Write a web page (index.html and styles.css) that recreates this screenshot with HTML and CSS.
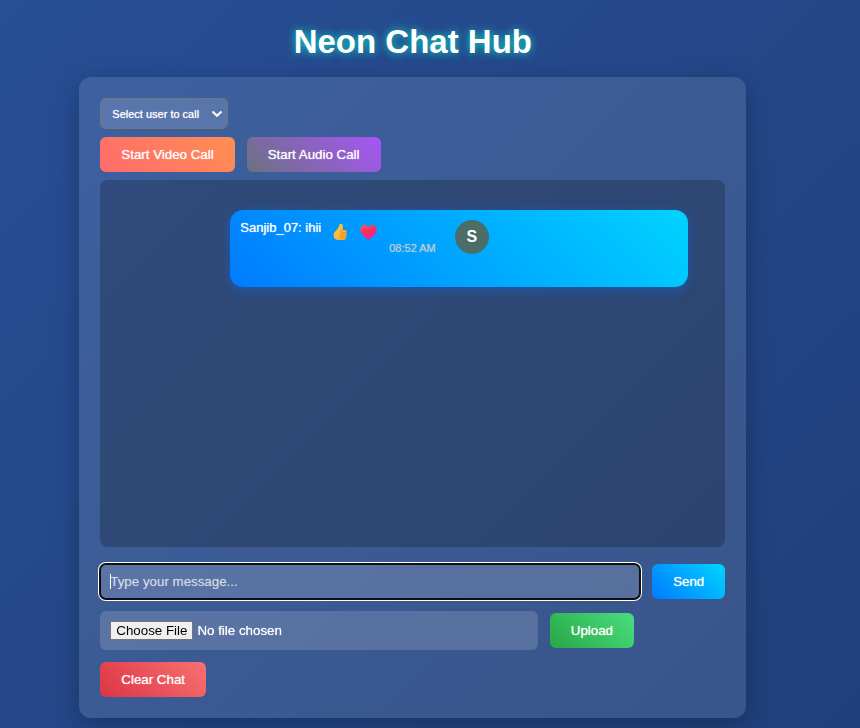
FILE: index.html
```html
<!DOCTYPE html>
<html lang="en">
<head>
<meta charset="utf-8">
<meta name="viewport" content="width=device-width, initial-scale=1">
<title>Neon Chat Hub</title>
<link rel="stylesheet" href="styles.css">
</head>
<body>
<h1 class="title">Neon Chat Hub</h1>
<main class="hub">
  <div class="picker">
    <select class="user-select" aria-label="User to call">
      <option>Select user to call</option>
    </select>
    <svg class="chevron" width="12" height="8" viewBox="0 0 12 8" aria-hidden="true">
      <path d="M1.500 1.500L6 5.800l4.500-4.300" fill="none" stroke="#fff" stroke-width="2"/>
    </svg>
  </div>
  <div class="calls">
    <button class="btn btn-video" type="button">Start Video Call</button>
    <button class="btn btn-audio" type="button">Start Audio Call</button>
  </div>
  <section class="chat" aria-label="Messages">
    <article class="message">
      <span class="text">Sanjib_07: ihii</span>
      <button class="react" type="button" aria-label="Like">
        <svg width="17" height="18" viewBox="0 0 17 18">
          <defs>
            <linearGradient id="thumb" x1="0" y1="0" x2="1" y2="1">
              <stop offset="0" stop-color="#ffd23c"/>
              <stop offset="1" stop-color="#f5a035"/>
            </linearGradient>
          </defs>
          <path fill="url(#thumb)" d="M7.400 1.600C8 .2 10.400.300 10.700 2.300c.3 1.800.1 3.200 0 4.700h2.400c1.500 0 2 1.500 1.100 2.400 1 .7.900 2-.1 2.500.9.800.6 2-.3 2.400.3 1.700-.8 2.700-2.300 2.700H6.400C3.500 17 1.600 15.200 1.600 12.400c0-2.300 1.100-3.600 2.500-4.900C6 5.800 7.100 4 7.400 1.600z"/>
          <path fill="none" stroke="#d98324" stroke-width=".6" d="M9.600 9.600h4.500M9.600 12h4.400M9.600 14.400h4M10.700 7c-1.700.4-2.300 1.900-1.300 2.600-.9.700-.9 1.800 0 2.400-.7.600-.6 1.800.2 2.400-.5.700-.4 1.600.2 2.200"/>
        </svg>
      </button>
      <button class="react" type="button" aria-label="Love">
        <svg width="17" height="18" viewBox="0 0 17 18">
          <defs>
            <linearGradient id="heart" x1="0" y1="0" x2=".6" y2="1">
              <stop offset="0" stop-color="#ff5a50"/>
              <stop offset=".5" stop-color="#fa2f60"/>
              <stop offset="1" stop-color="#f0209a"/>
            </linearGradient>
          </defs>
          <path fill="url(#heart)" d="M8.500 4.200C7.600 2.700 6.300 2 4.800 2 2.300 2 .4 3.900.4 6.600c0 4.300 4.200 7.300 7.200 9.700.5.400 1.300.4 1.800 0 3-2.400 7.200-5.400 7.200-9.700C16.600 3.900 14.700 2 12.200 2c-1.500 0-2.800.7-3.700 2.200z"/>
        </svg>
      </button>
      <time class="time">08:52 AM</time>
      <span class="avatar">S</span>
    </article>
  </section>
  <form class="compose">
    <input class="field entry" type="text" placeholder="Type your message..." aria-label="Message" autofocus>
    <button class="btn btn-send" type="button">Send</button>
  </form>
  <form class="upload">
    <input class="field file" type="file" aria-label="File to send">
    <button class="btn btn-upload" type="button">Upload</button>
  </form>
  <button class="btn btn-clear" type="button">Clear Chat</button>
</main>
</body>
</html>
```
FILE: styles.css
```css
* { box-sizing: border-box; }

body {
  margin: 0;
  min-height: 100vh;
  padding: 22px 4% 10px 0;
  background: linear-gradient(135deg, #274f96, #203f7a);
  color: #fff;
  font-family: "Liberation Sans", Arial, sans-serif;
}

.title {
  margin: 0 0 15px;
  font-size: 33px;
  line-height: 40px;
  text-align: center;
  text-shadow: 0 0 8px rgba(0, 255, 213, .8);
}

.hub {
  width: 90%;
  max-width: 667px;
  margin: 0 auto;
  padding: 21px;
  border-radius: 12px;
  background: rgba(255, 255, 255, .11);
  box-shadow: 0 7px 26px rgba(0, 0, 0, .25);
}

.user-select,
.btn,
.field,
.text {
  text-shadow: 0 0 1px rgba(255, 255, 255, .8);
}

.picker {
  position: relative;
  width: 128px;
}

.user-select {
  display: block;
  width: 100%;
  height: 31px;
  padding: 0 11px;
  appearance: none;
  border: 1px solid #767676;
  border-radius: 6px;
  background: rgba(255, 255, 255, .15);
  color: #fff;
  font-family: inherit;
  font-size: 11px;
}

.chevron {
  position: absolute;
  top: 12px;
  right: 5px;
  pointer-events: none;
}

.calls {
  display: flex;
  gap: 12px;
  margin: 8px 0;
}

.btn {
  height: 35px;
  padding: 0 21px;
  border: 0;
  border-radius: 6px;
  color: #fff;
  font-family: inherit;
}

.btn-video { background: linear-gradient(45deg, #ff6b6b, #ff8e53); }
.btn-audio { background: linear-gradient(45deg, #6b7280, #a855f7); }
.btn-send { background: linear-gradient(45deg, #007bff, #00d4ff); }
.btn-upload { background: linear-gradient(45deg, #28a745, #4ade80); }
.btn-clear { background: linear-gradient(45deg, #dc3545, #f87171); }

.chat {
  min-height: 367px;
  padding: 30px 37px;
  border-radius: 8px;
  background: rgba(0, 0, 0, .21);
}

.message {
  display: flex;
  align-items: flex-start;
  width: calc(100% - 93px);
  min-height: 77px;
  margin-left: auto;
  padding: 10px;
  border-radius: 13px;
  background: linear-gradient(45deg, #007bff, #00d4ff);
  box-shadow: 0 3px 12px rgba(0, 123, 255, .4);
}

.text {
  font-size: 13px;
  line-height: 16px;
}

.react {
  height: 24px;
  margin-left: 11px;
  padding: 0;
  border: 0;
  background: none;
}

.react svg { display: block; }

.time {
  margin: 22px 19px 0 12px;
  color: #bccbd8;
  font-size: 11px;
  line-height: 13px;
  text-shadow: 0 0 1px rgba(188, 203, 216, .8);
}

.avatar {
  display: grid;
  place-items: center;
  width: 34px;
  height: 34px;
  border-radius: 50%;
  background: #4b6e69;
  font-size: 16px;
  font-weight: bold;
}

.compose,
.upload {
  display: flex;
  align-items: center;
  gap: 12px;
}

.compose { margin: 17px 0 12px; }
.upload { margin-bottom: 12px; }

.field {
  flex: 1;
  min-width: 0;
  height: 35px;
  padding: 10px;
  border: 0;
  border-radius: 6px;
  background-color: rgba(255, 255, 255, .15);
  color: #fff;
  font-family: inherit;
}

.field::placeholder {
  color: rgba(255, 255, 255, .65);
  text-shadow: 0 0 1px rgba(255, 255, 255, .4);
}

.entry:focus {
  outline: 2px solid #101010;
  outline-offset: -1px;
  box-shadow: 0 0 0 2px #fff;
}

/* Steady caret while the box is empty */
.entry:focus:placeholder-shown {
  background-image: linear-gradient(#fff, #fff);
  background-position: 10px center;
  background-size: 1px 15px;
  background-repeat: no-repeat;
  caret-color: transparent;
}

.file {
  flex: 0 0 70%;
  height: 39px;
}

.file::file-selector-button {
  height: 19px;
  padding: 0 5px;
  border: 1px solid #767676;
  background: #efefef;
  color: #000;
  font-family: inherit;
  text-shadow: none;
}
```
